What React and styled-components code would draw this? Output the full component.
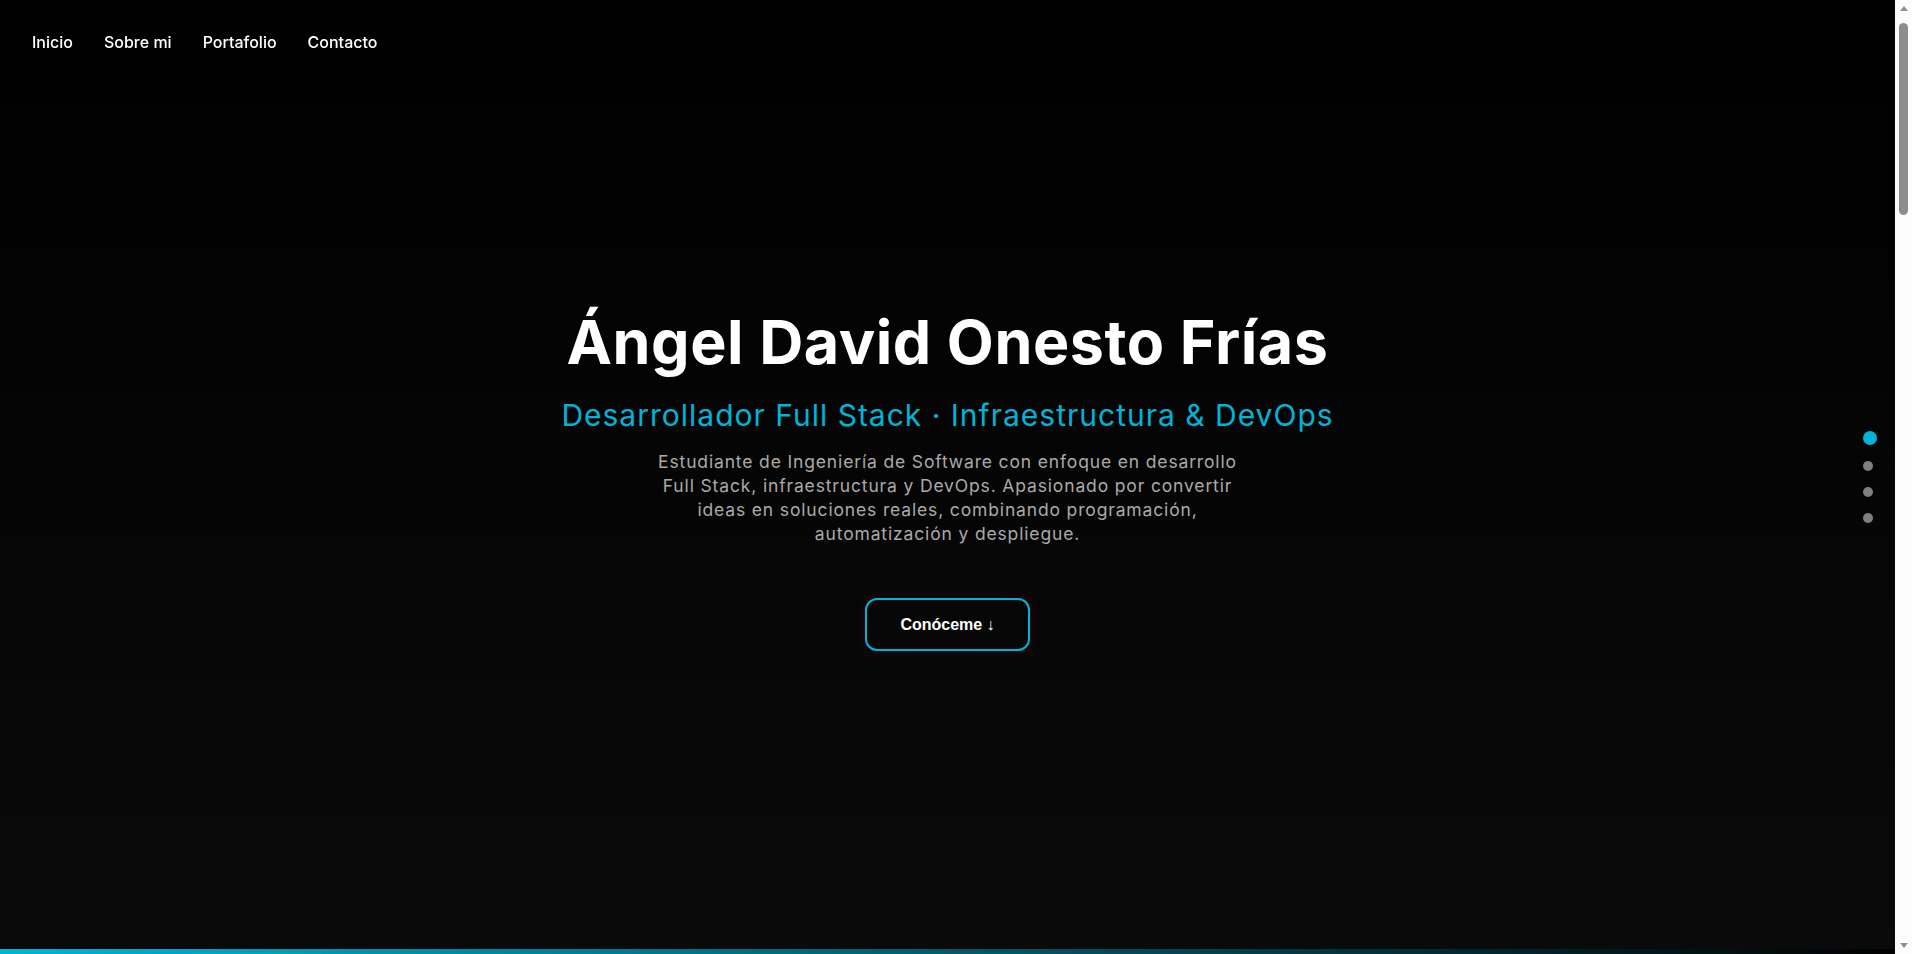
import styled, { createGlobalStyle } from "styled-components";

const sections = [
  { id: "inicio", label: "Inicio" },
  { id: "sobre-mi", label: "Sobre mi" },
  { id: "portafolio", label: "Portafolio" },
  { id: "contacto", label: "Contacto" },
];

function App() {
  const active = "inicio";

  return (
    <>
      <GlobalStyle />
      <Nav>
        {sections.map((s) => (
          <NavLink key={s.id} href={`#${s.id}`}>
            {s.label}
          </NavLink>
        ))}
      </Nav>

      <Dots>
        {sections.map((s) => (
          <Dot key={s.id} href={`#${s.id}`} $active={s.id === active} />
        ))}
      </Dots>

      <ScrollRail aria-hidden="true">
        <RailArrow $dir="up" />
        <RailThumb />
        <RailSpacer />
        <RailArrow $dir="down" />
      </ScrollRail>

      <Hero id="inicio">
        <Title>Ángel David Onesto Frías</Title>
        <Subtitle>Desarrollador Full Stack · Infraestructura &amp; DevOps</Subtitle>
        <Intro>
          Estudiante de Ingeniería de Software con enfoque en desarrollo Full
          Stack, infraestructura y DevOps. Apasionado por convertir ideas en
          soluciones reales, combinando programación, automatización y
          despliegue.
        </Intro>
        <CtaButton as="a" href="#sobre-mi">
          Conóceme ↓
        </CtaButton>
      </Hero>
    </>
  );
}

const GlobalStyle = createGlobalStyle`
  * {
    box-sizing: border-box;
  }
  html {
    margin: 0;
    padding: 0;
    background-color: #0a0a0a;
  }
  body {
    margin: 0 17px 0 0;
    padding: 0;
    background-color: #0a0a0a;
    color: #ffffff;
    font-family: Inter, "Noto Sans", sans-serif;
  }
`;

const Nav = styled.nav`
  position: fixed;
  top: 0;
  left: 0;
  z-index: 10;
  display: flex;
  gap: 31px;
  padding: 24px 32px;
`;

const NavLink = styled.a`
  padding: 8px 0;
  font-size: 16px;
  font-weight: 500;
  color: #ffffff;
  text-decoration: none;
`;

const Dots = styled.div`
  position: fixed;
  right: 35px;
  top: 50%;
  transform: translateY(-50%);
  z-index: 10;
  display: flex;
  flex-direction: column;
  gap: 16px;
`;

const Dot = styled.a`
  display: block;
  width: ${(p) => (p.$active ? "14px" : "10px")};
  height: ${(p) => (p.$active ? "14px" : "10px")};
  border-radius: 50%;
  background-color: ${(p) => (p.$active ? "#00b4d8" : "#808080")};
`;

const ScrollRail = styled.div`
  position: fixed;
  top: 0;
  right: 0;
  bottom: 0;
  z-index: 20;
  width: 17px;
  display: flex;
  flex-direction: column;
  align-items: center;
  background-color: #fdfdfd;
`;

const RailArrow = styled.div`
  flex: none;
  width: 17px;
  height: 17px;
  display: flex;
  align-items: center;
  justify-content: center;

  &::before {
    content: "";
    width: 0;
    height: 0;
    border-left: 4.5px solid transparent;
    border-right: 4.5px solid transparent;
    ${(p) =>
      p.$dir === "up"
        ? "border-bottom: 5px solid #8f8f8f;"
        : "border-top: 5px solid #8f8f8f;"}
  }
`;

const RailThumb = styled.div`
  flex: none;
  width: 9px;
  height: 192px;
  margin-top: 6px;
  border-radius: 5px;
  background-color: #8d8d8d;
`;

const RailSpacer = styled.div`
  flex: 1;
`;

const Hero = styled.section`
  min-height: 100vh;
  display: flex;
  flex-direction: column;
  align-items: center;
  justify-content: center;
  text-align: center;
  padding: 6px 32px 0;
  background: linear-gradient(180deg, #000000 0%, #0a0a0a 100%);
  border-bottom: 5px solid;
  border-image: linear-gradient(90deg, #00b4d8 0%, rgba(0, 180, 216, 0) 100%) 1;
`;

const Title = styled.h1`
  margin: 0;
  font-size: 61px;
  font-weight: 700;
  letter-spacing: 0.55px;
  color: #ffffff;
`;

const Subtitle = styled.h2`
  margin: 18px 0 0;
  font-size: 30px;
  font-weight: 400;
  letter-spacing: 1px;
  color: #00b4d8;
`;

const Intro = styled.p`
  margin: 17px 0 52px;
  max-width: 600px;
  font-size: 17.5px;
  line-height: 24px;
  letter-spacing: 0.85px;
  color: #aaaaaa;
`;

const CtaButton = styled.button`
  display: inline-block;
  padding: 16px 33px;
  border: 2px solid #00b4d8;
  border-radius: 12px;
  background: transparent;
  color: #ffffff;
  font-family: "Liberation Sans", Arial, sans-serif;
  font-size: 16px;
  font-weight: 700;
  line-height: 17px;
  text-decoration: none;
  box-shadow: 0 0 14px rgba(255, 0, 120, 0.12);
  cursor: pointer;
`;

export default App;
